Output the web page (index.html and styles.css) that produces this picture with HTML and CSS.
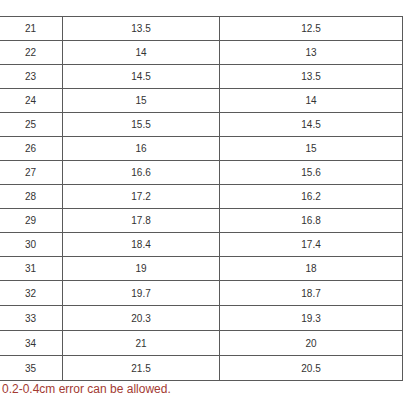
FILE: index.html
```html
<!DOCTYPE html>
<html>
<head>
<meta charset="utf-8">
<link rel="stylesheet" href="styles.css">
</head>
<body>
<table class="size-table">
<tbody>
<tr><td>21</td><td>13.5</td><td>12.5</td></tr>
<tr><td>22</td><td>14</td><td>13</td></tr>
<tr><td>23</td><td>14.5</td><td>13.5</td></tr>
<tr><td>24</td><td>15</td><td>14</td></tr>
<tr><td>25</td><td>15.5</td><td>14.5</td></tr>
<tr><td>26</td><td>16</td><td>15</td></tr>
<tr><td>27</td><td>16.6</td><td>15.6</td></tr>
<tr><td>28</td><td>17.2</td><td>16.2</td></tr>
<tr><td>29</td><td>17.8</td><td>16.8</td></tr>
<tr><td>30</td><td>18.4</td><td>17.4</td></tr>
<tr><td>31</td><td>19</td><td>18</td></tr>
<tr><td>32</td><td>19.7</td><td>18.7</td></tr>
<tr><td>33</td><td>20.3</td><td>19.3</td></tr>
<tr><td>34</td><td>21</td><td>20</td></tr>
<tr><td>35</td><td>21.5</td><td>20.5</td></tr>
</tbody>
</table>
<p class="note">0.2-0.4cm error can be allowed.</p>
</body>
</html>
```
FILE: styles.css
```css
html, body {
  margin: 0;
  padding: 0;
  background: #ffffff;
}
body {
  font-family: "Liberation Sans", Arial, sans-serif;
  width: 416px;
  height: 416px;
  overflow: hidden;
}
.size-table {
  margin: 16px 0 0 -1px;
  border-collapse: collapse;
  table-layout: fixed;
  width: 404px;
}
.size-table td {
  border: 1px solid #5a5a5a;
  height: 23px;
  padding: 0;
  text-align: center;
  vertical-align: middle;
  font-size: 10px;
  color: #333333;
}
.size-table tr:nth-child(n+12) td { height: 24px; }
.size-table td:nth-child(1) { width: 63px; border-left: none; }
.size-table td:nth-child(2) { width: 156px; }
.size-table td:nth-child(3) { width: 182px; }
.note {
  margin: 1px 0 0 2px;
  font-size: 12px;
  color: #a33a32;
  line-height: 14px;
}
```
